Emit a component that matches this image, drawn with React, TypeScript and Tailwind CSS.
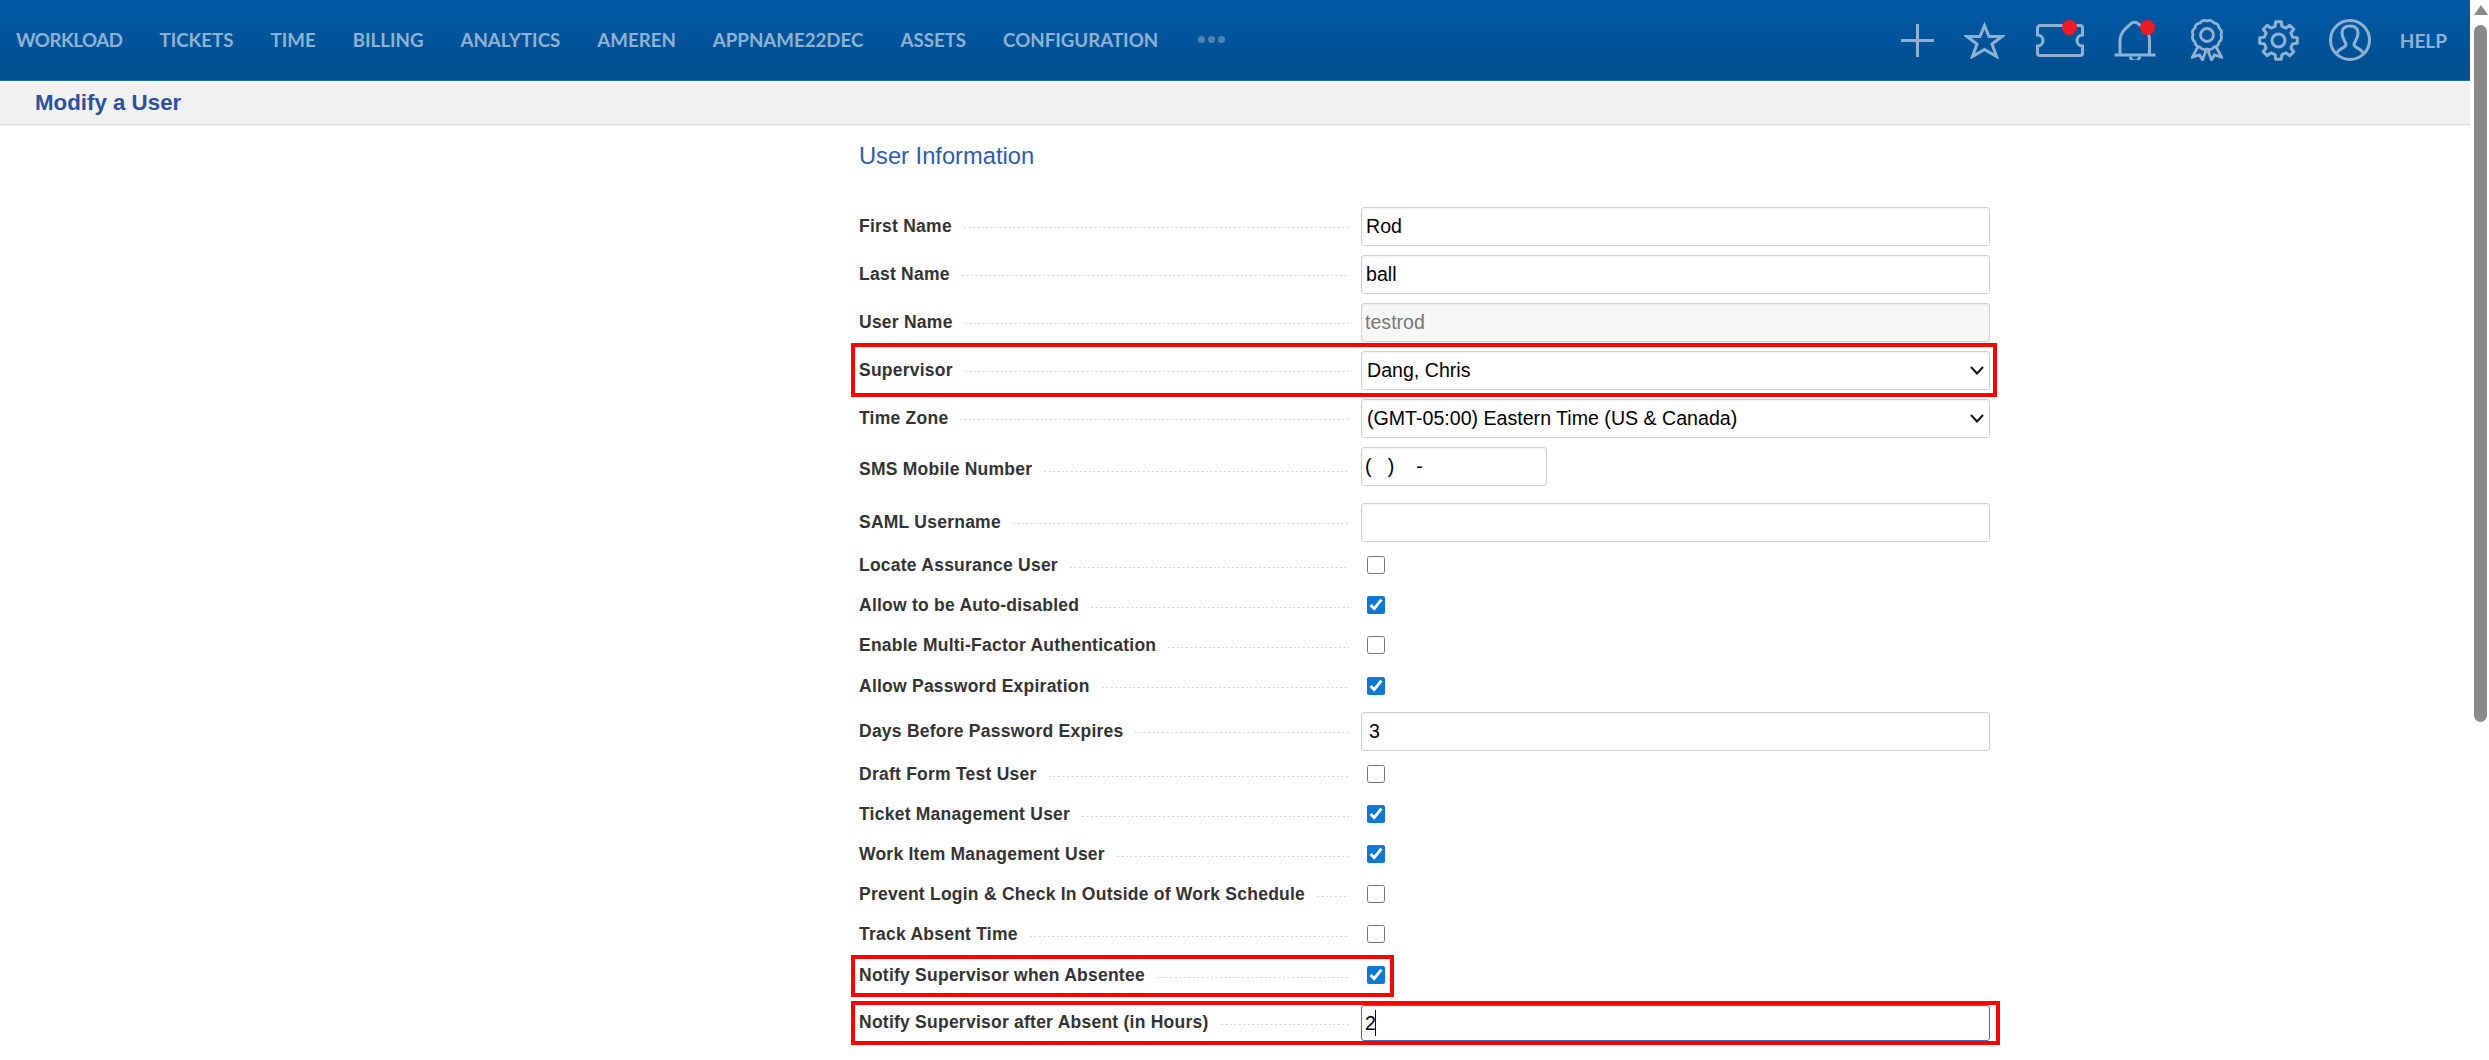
import React from 'react';

const navItems = ['WORKLOAD', 'TICKETS', 'TIME', 'BILLING', 'ANALYTICS', 'AMEREN', 'APPNAME22DEC', 'ASSETS', 'CONFIGURATION'];

const iconStroke = '#8fb2d4';

const scallopPath = (cx: number, cy: number, r: number, n: number) => {
  let d = '';
  for (let i = 0; i <= n; i++) {
    const a = (i / n) * Math.PI * 2;
    const x = (cx + r * Math.cos(a)).toFixed(2);
    const y = (cy + r * Math.sin(a)).toFixed(2);
    d += i === 0 ? `M${x} ${y}` : ` A6 6 0 0 1 ${x} ${y}`;
  }
  return d + 'Z';
};

const gearPath = (cx: number, cy: number, outer: number, inner: number, n: number) => {
  const pts: string[] = [];
  const step = (Math.PI * 2) / n;
  for (let i = 0; i < n; i++) {
    const a = i * step - Math.PI / 2;
    const p = (rad: number, off: number) =>
      `${(cx + rad * Math.cos(a + off * step)).toFixed(2)} ${(cy + rad * Math.sin(a + off * step)).toFixed(2)}`;
    pts.push(p(inner, -0.3), p(outer, -0.19), p(outer, 0.19), p(inner, 0.3));
  }
  return 'M' + pts.join(' L') + 'Z';
};

const HeaderIcons = () => (
  <div className="ml-auto flex items-center pr-[23px]">
    <svg width="33" height="33" viewBox="0 0 33 33" fill="none" stroke={iconStroke} strokeWidth="3">
      <path d="M16.5 0V33M0 16.5H33" />
    </svg>
    <svg className="ml-[30px]" width="41" height="37" viewBox="0 0 41 37" fill="none" stroke={iconStroke} strokeWidth="3">
      <path d="M20.5 3.5L25 14.5H38L28 22L32.5 34.5L20.5 27.5L8.5 34.5L13 22L3 14.5H16Z" />
    </svg>
    <div className="relative ml-[31px] h-[33px] w-[48px]">
      <svg width="48" height="33" viewBox="0 0 48 33" fill="none" stroke={iconStroke} strokeWidth="3">
        <path d="M4 1.5H44A2.5 2.5 0 0 1 46.5 4V11A5.5 5.5 0 0 0 46.5 22V29A2.5 2.5 0 0 1 44 31.5H4A2.5 2.5 0 0 1 1.5 29V22A5.5 5.5 0 0 0 1.5 11V4A2.5 2.5 0 0 1 4 1.5Z" />
      </svg>
      <span className="absolute left-[26px] top-[-4px] h-[15px] w-[15px] rounded-full bg-[#ed1c24]" />
    </div>
    <div className="relative ml-[30px] h-[40px] w-[42px]">
      <svg width="42" height="40" viewBox="0 0 42 40" fill="none" stroke={iconStroke} strokeWidth="3">
        <path d="M6 34.5V20C6 13 11 9 16 4.5C18.5 1.5 22 1.5 24.5 4C30 8 35.5 12 35.5 20V34.5" />
        <path d="M0.5 35H41.5" />
        <path d="M16.5 36.5A4.5 4.5 0 0 0 25.5 36.5" />
      </svg>
      <span className="absolute left-[26.5px] top-[-0.5px] h-[15px] w-[15px] rounded-full bg-[#ed1c24]" />
    </div>
    <svg className="ml-[35px]" width="32" height="42" viewBox="0 0 32 42" fill="none" stroke={iconStroke} strokeWidth="2.8">
      <path d={scallopPath(16, 16, 14, 12)} />
      <circle cx="16" cy="16" r="6.5" />
      <path d="M7 27.5L1.5 38L8.5 36L11.5 41L15 31.5" />
      <path d="M25 27.5L30.5 38L23.5 36L20.5 41L17 31.5" />
    </svg>
    <svg className="ml-[35px]" width="41" height="41" viewBox="0 0 41 41" fill="none" stroke={iconStroke} strokeWidth="3" strokeLinejoin="round">
      <path d={gearPath(20.5, 20.5, 19, 14.5, 8)} />
      <circle cx="20.5" cy="20.5" r="6.5" />
    </svg>
    <svg className="ml-[30px]" width="42" height="42" viewBox="0 0 42 42" fill="none" stroke={iconStroke} strokeWidth="3">
      <circle cx="21" cy="21" r="19.5" />
      <path d="M8 34C10 29 17 29 17 25.5C17 23 13 20 13 14C13 9 16 7 21 7C26 7 29 9 29 14C29 20 25 23 25 25.5C25 29 32 29 34 34" />
    </svg>
    <span className="ml-[29px] font-['Lato',sans-serif] text-[19px] font-bold leading-none text-[#8fb2d4]">HELP</span>
  </div>
);

const Dots = () => (
  <span className="mx-[12px] mt-[2px] h-[1px] flex-1 bg-[linear-gradient(to_right,#cfcfcf_1.5px,transparent_1.5px)] bg-[length:4.5px_1px] bg-repeat-x" />
);

const Label = ({ text, className = '' }: { text: string; className?: string }) => (
  <div className={`flex w-[502px] items-center ${className}`}>
    <span className="whitespace-nowrap font-['Liberation_Sans',Arial,sans-serif] text-[17.5px] font-bold leading-none tracking-[0.24px] text-[#333]">{text}</span>
    <Dots />
  </div>
);

const fieldCls =
  "h-full rounded-[3px] border border-[#cfcfcf] bg-white font-['Liberation_Sans',Arial,sans-serif] text-[19.6px] text-black shadow-[inset_0_1px_2px_rgba(0,0,0,0.06)] outline-none";

const TextRow = ({ label, value, className, pad = 'px-[4px]' }: { label: string; value: string; className: string; pad?: string }) => (
  <div className={`flex h-[39px] ${className}`}>
    <Label text={label} />
    <input readOnly defaultValue={value} className={`${fieldCls} ${pad} w-[629px]`} />
  </div>
);

const SelectRow = ({ label, value, className }: { label: string; value: string; className: string }) => (
  <div className={`flex h-[39px] ${className}`}>
    <Label text={label} />
    <div className="relative w-[629px]">
      <select defaultValue={value} className={`${fieldCls} w-full appearance-none px-[5px]`}>
        <option>{value}</option>
      </select>
      <svg className="pointer-events-none absolute right-[6px] top-[15px]" width="14" height="9" viewBox="0 0 14 9" fill="none" stroke="#111" strokeWidth="2">
        <path d="M1 1L7 7.5L13 1" />
      </svg>
    </div>
  </div>
);

const CheckRow = ({ label, checked, className = 'h-[40px]' }: { label: string; checked?: boolean; className?: string }) => (
  <div className={`flex items-center ${className}`}>
    <Label text={label} className="pt-[2px]" />
    <input
      type="checkbox"
      readOnly
      checked={!!checked}
      className="m-0 ml-[6px] h-[18px] w-[18px] accent-[#0f78d4]"
    />
  </div>
);

const RedBox = ({ className }: { className: string }) => (
  <div className={`pointer-events-none absolute z-10 border-[4px] border-[#ff0000] ${className}`} />
);

export default function App() {
  return (
    <div className="flex h-screen overflow-hidden bg-white">
      <div className="min-w-0 flex-1">
        {/* Top nav */}
        <header className="flex h-[81px] items-center border-b border-[#2a6aa6] bg-gradient-to-b from-[#005aa6] to-[#004e8e]">
          <nav className="flex items-center gap-[37px] pl-[16px] font-['Lato',sans-serif] text-[18.7px] font-bold leading-none text-[#8fb2d4]">
            {navItems.map((item) => (
              <a key={item} href="#" className={item === 'WORKLOAD' ? 'whitespace-nowrap tracking-[-0.5px]' : 'whitespace-nowrap'}>{item}</a>
            ))}
            <span className="ml-[3px] flex gap-[3px]">
              <i className="h-[7px] w-[7px] rounded-full bg-[#4f82b4]" />
              <i className="h-[7px] w-[7px] rounded-full bg-[#4f82b4]" />
              <i className="h-[7px] w-[7px] rounded-full bg-[#4f82b4]" />
            </span>
          </nav>
          <HeaderIcons />
        </header>

        {/* Page title */}
        <div className="flex h-[44px] items-center border-b border-[#d8d8d8] bg-[#f1f1f1] pl-[35px] shadow-[0_1px_3px_rgba(0,0,0,0.06)]">
          <h1 className="font-['Liberation_Sans',Arial,sans-serif] text-[22.3px] font-bold text-[#2d50a0]">Modify a User</h1>
        </div>

        {/* Form */}
        <div className="ml-[859px] w-[1131px]">
          <h2 className="mb-[36px] mt-[16px] h-[30px] font-['Liberation_Sans',Arial,sans-serif] text-[23.7px] leading-[30px] text-[#2d5bb0]">User Information</h2>

          <TextRow label="First Name" value="Rod" className="mb-[9px]" />
          <TextRow label="Last Name" value="ball" className="mb-[9px]" />
          <div className="mb-[9px] flex h-[39px]">
            <Label text="User Name" />
            <input readOnly defaultValue="testrod" className={`${fieldCls} w-[629px] !bg-[#f7f7f7] px-[3px] !text-[#777]`} />
          </div>
          <div className="relative">
            <SelectRow label="Supervisor" value="Dang, Chris" className="mb-[9px]" />
            <RedBox className="left-[-8px] right-[-7px] top-[-8px] h-[54px]" />
          </div>
          <SelectRow label="Time Zone" value="(GMT-05:00) Eastern Time (US & Canada)" className="mb-[9px]" />
          <div className="mb-[17px] flex h-[39px]">
            <Label text="SMS Mobile Number" className="pt-[7px]" />
            <input readOnly defaultValue="(   )    -" className={`${fieldCls} w-[186px] px-[3px]`} />
          </div>
          <TextRow label="SAML Username" value="" className="mb-[3px]" />

          <CheckRow label="Locate Assurance User" />
          <CheckRow label="Allow to be Auto-disabled" checked />
          <CheckRow label="Enable Multi-Factor Authentication" />
          <CheckRow label="Allow Password Expiration" checked className="h-[41px]" />
          <TextRow label="Days Before Password Expires" value="3" className="mb-[3px] mt-[6px]" pad="px-[7px]" />
          <CheckRow label="Draft Form Test User" />
          <CheckRow label="Ticket Management User" checked />
          <CheckRow label="Work Item Management User" checked />
          <CheckRow label="Prevent Login & Check In Outside of Work Schedule" />
          <CheckRow label="Track Absent Time" />
          <div className="relative mt-[1px] h-[40px]">
            <CheckRow label="Notify Supervisor when Absentee" checked />
            <RedBox className="left-[-8px] top-0 h-[42px] w-[543px]" />
          </div>
          <div className="relative mt-[10px] flex h-[36px]">
            <Label text="Notify Supervisor after Absent (in Hours)" />
            <div className="relative w-[629px]">
              <input readOnly defaultValue="2" className={`${fieldCls} w-full !border-[#4a6fb0] px-[3px]`} />
              <span className="absolute left-[14px] top-[5px] h-[26px] w-[1px] bg-black" />
            </div>
            <RedBox className="left-[-8px] right-[-10px] top-[-4px] h-[44px]" />
          </div>
        </div>
      </div>

      {/* Scrollbar */}
      <div className="flex w-[19px] flex-col items-center bg-white pl-[2px] pt-[5px]">
        <span className="h-0 w-0 border-x-[7px] border-b-[10px] border-x-transparent border-b-[#8a8a8a]" />
        <span className="mt-[10px] h-[697px] w-[13px] rounded-full bg-[#8a8a8a]" />
      </div>
    </div>
  );
}
